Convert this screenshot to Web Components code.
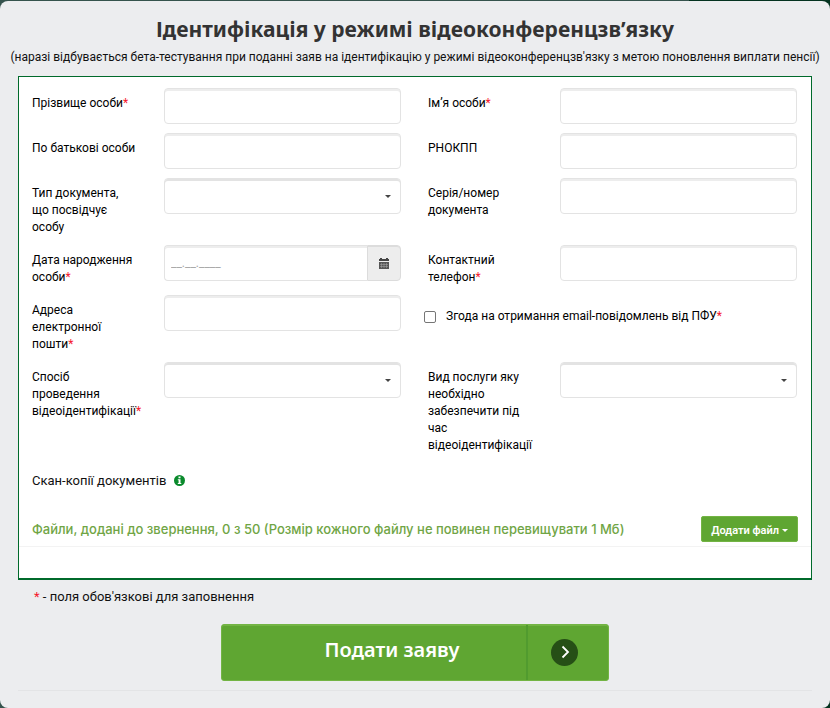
<!DOCTYPE html>
<html lang="uk">
<head>
<meta charset="utf-8">
<meta name="viewport" content="width=device-width, initial-scale=1">
<title>Ідентифікація у режимі відеоконференцзв’язку</title>
<style>
  body {
    margin: 0;
    min-height: 100vh;
    display: flex;
    background: linear-gradient(90deg, #35534d 83%, #04331f 83%);
    --font-heading: "Noto Sans", "Open Sans", sans-serif;
    --font-ui: Roboto, "Noto Sans", sans-serif;
    --font-count: Inter, "Liberation Sans", sans-serif;
    --line: #e3e3e3;
    --green: #5fa632;
    --green-light: #73b444;
    --required: #f5172c;
    font-family: var(--font-ui);
    font-size: 12px;
    line-height: 17px;
    color: #111;
  }
</style>
</head>
<body>

<request-page>
  <span slot="title">Ідентифікація у режимі відеоконференцзв’язку</span>
  <span slot="note">(наразі відбувається бета-тестування при поданні заяв на ідентифікацію у режимі відеоконференцзв'язку з метою поновлення виплати пенсії)</span>

  <request-panel>
    <text-field required>Прізвище особи</text-field>
    <text-field required>Ім’я особи</text-field>
    <text-field>По батькові особи</text-field>
    <text-field>РНОКПП</text-field>
    <select-field>Тип документа, що посвідчує особу</select-field>
    <text-field>Серія/номер документа</text-field>
    <date-field required>Дата народження особи</date-field>
    <text-field type="tel" required>Контактний телефон</text-field>
    <text-field type="email" required>Адреса електронної пошти</text-field>
    <check-field required>Згода на отримання email-повідомлень від ПФУ</check-field>
    <select-field required>Спосіб проведення відеоідентифікації</select-field>
    <select-field>Вид послуги яку необхідно забезпечити під час відеоідентифікації</select-field>
    <scan-files slot="files" count="0" max="50" size="1"></scan-files>
  </request-panel>

  <submit-button slot="actions">Подати заяву</submit-button>
</request-page>

<script>
/**
 * Attaches an open shadow root with the given markup.
 * @param $elem
 * @param html
 */
function render($elem, html) {
  const $template = document.createElement("template");
  $template.innerHTML = html;
  const shadow = $elem.attachShadow({ mode: "open" });
  shadow.appendChild($template.content.cloneNode(true));
  return shadow;
}

// Shared by all the labelled fields
const FIELD_STYLES = `
  * {
    box-sizing: border-box;
  }

  :host {
    display: grid;
    grid-template-columns: minmax(0, 132fr) minmax(0, 237fr);
    align-items: start;
    min-width: 0;
  }

  label {
    padding: 7px 28px 0 0;
    font: 400 12px/17px var(--font-ui);
    color: #000;
  }

  .star {
    color: var(--required);
  }

  input, select {
    width: 100%;
    min-width: 0;
    height: 36px;
    margin: 0;
    padding: 4px 6px;
    border: 1px solid var(--line);
    border-radius: 4px;
    background: #fff;
    box-shadow: inset 0 2px 0 #ededed;
    font: 12px/17px var(--font-ui);
    color: #111;
  }
`;

class BaseField extends HTMLElement {
  constructor() {
    super();
    render(this, `
      <style>${FIELD_STYLES}${this.styles}</style>
      <label for="control"><slot></slot>${this.star}</label>
      ${this.control}
    `);
  }

  get star() {
    return this.hasAttribute("required") ? `<span class="star">*</span>` : "";
  }

  get styles() {
    return "";
  }

  get control() {
    return `<input id="control" type="${this.getAttribute("type") || "text"}">`;
  }
}

class TextField extends BaseField {}

class SelectField extends BaseField {
  get styles() {
    return `
      .select {
        display: grid;
        align-items: center;
      }

      .select > * {
        grid-area: 1 / 1;
      }

      select {
        appearance: none;
        box-shadow: inset 0 2px 0 var(--line);
      }

      svg {
        justify-self: end;
        margin-right: 10px;
        pointer-events: none;
      }
    `;
  }

  get control() {
    return `
      <div class="select">
        <select id="control"><option></option></select>
        <svg width="6" height="3" viewBox="0 0 6 3"><path d="M0 0h6L3 3z" fill="#444"/></svg>
      </div>
    `;
  }
}

class DateField extends BaseField {
  get styles() {
    return `
      .group {
        display: flex;
      }

      input {
        flex: 1;
        border-right: 0;
        border-radius: 4px 0 0 4px;
      }

      input::placeholder {
        color: #aaa;
        opacity: 1;
      }

      button {
        display: grid;
        place-items: center;
        width: 34px;
        height: 36px;
        padding: 0;
        border: 1px solid #dcdcdc;
        border-radius: 0 4px 4px 0;
        background: #ededed;
        box-shadow: inset 0 1px 0 #dcdcdc;
      }
    `;
  }

  get control() {
    return `
      <div class="group">
        <input id="control" type="text" placeholder="__.__.____">
        <button type="button" aria-label="Календар">
          <svg width="10" height="11" viewBox="0 0 10 11">
            <path d="M0 1h10v2H0zM1 0h2v1H1zM7 0h2v1H7z" fill="#444"/>
            <path d="M0 4h10v7H0z" fill="#555"/>
            <path d="M1 6.5h8M1 8.5h8M2.5 5v5M5 5v5M7.5 5v5" stroke="#aaa" stroke-width=".5"/>
          </svg>
        </button>
      </div>
    `;
  }
}

class CheckField extends BaseField {
  get styles() {
    return `
      :host {
        display: flex;
        gap: 10px;
        align-items: center;
        align-self: start;
        padding-top: 13px;
        margin-left: -4px;
      }

      label {
        order: 1;
        padding: 0;
      }

      input {
        appearance: none;
        flex: none;
        width: 12px;
        height: 12px;
        padding: 0;
        border: 1px solid #767676;
        border-radius: 2px;
        box-shadow: none;
      }

      input:checked {
        background: var(--green);
      }
    `;
  }

  get control() {
    return `<input id="control" type="checkbox">`;
  }
}

class ScanFiles extends HTMLElement {
  constructor() {
    super();
    render(this, `
      <style>
        :host {
          display: block;
        }

        .scans, .files {
          display: flex;
          align-items: center;
          padding: 0 13px;
        }

        .scans {
          gap: 8px;
          font-size: 13px;
        }

        .files {
          justify-content: space-between;
          gap: 16px;
          margin-top: 27px;
          padding-bottom: 4px;
          border-bottom: 1px solid #f3f3f3;
          color: #70a545;
          font: 500 13px/17px var(--font-count);
        }

        button {
          display: flex;
          align-items: center;
          gap: 3px;
          height: 26px;
          padding: 2px 9px 0;
          border: 1px solid var(--green-light);
          border-radius: 2px;
          background: var(--green);
          font: 600 11px/17px var(--font-ui);
          color: #fff;
          white-space: nowrap;
        }
      </style>
      <div class="scans">
        <span>Скан-копії документів</span>
        <svg width="11" height="11" viewBox="0 0 11 11">
          <circle cx="5.5" cy="5.5" r="5.5" fill="#0a8a2c"/>
          <path d="M4.5 1.6h2v1.6h-2zM3.8 4.3h2.7v3.6h.8v1H3.8v-1h.8V5.3h-.8z" fill="#fff"/>
        </svg>
      </div>
      <div class="files">
        <span>Файли, додані до звернення, ${this.getAttribute("count")} з ${this.getAttribute("max")} (Розмір кожного файлу не повинен перевищувати ${this.getAttribute("size")} Мб)</span>
        <button type="button">Додати файл
          <svg width="6" height="3" viewBox="0 0 6 3"><path d="M0 0h6L3 3z" fill="#fff"/></svg>
        </button>
      </div>
    `);
  }
}

class RequestPanel extends HTMLElement {
  constructor() {
    super();
    render(this, `
      <style>
        :host {
          display: block;
          padding: 11px 0 31px;
          border: 1px solid #006a2b;
          border-bottom-width: 2px;
          background: #fff;
        }

        .fields {
          display: grid;
          grid-template-columns: 1fr 1fr;
          gap: 9px 27px;
          padding: 0 14px 18px 13px;
        }
      </style>
      <div class="fields"><slot></slot></div>
      <slot name="files"></slot>
    `);
  }
}

class SubmitButton extends HTMLElement {
  constructor() {
    super();
    render(this, `
      <style>
        :host {
          display: block;
        }

        button {
          display: flex;
          align-items: stretch;
          width: 388px;
          max-width: 100%;
          height: 57px;
          margin: 0 auto;
          padding: 0;
          border: 1px solid var(--green-light);
          border-radius: 3px;
          background: var(--green);
          box-shadow: inset 0 1px 0 var(--green-light);
          color: #fff;
          font: 600 20px/28px var(--font-heading);
        }

        .text {
          flex: 1;
          padding: 11px 0 0 36px;
        }

        .arrow {
          display: grid;
          place-items: center;
          width: 82px;
          padding-right: 8px;
          box-sizing: border-box;
          border-left: 2px solid #519b2f;
        }
      </style>
      <button type="submit">
        <span class="text"><slot></slot></span>
        <span class="arrow">
          <svg width="27" height="27" viewBox="0 0 27 27">
            <circle cx="13.5" cy="13.5" r="13.5" fill="#264f16"/>
            <path d="M11.5 7.5l5.5 5.5-5.5 5.5" fill="none" stroke="#fff" stroke-width="1.8"/>
          </svg>
        </span>
      </button>
    `);
  }
}

class RequestPage extends HTMLElement {
  constructor() {
    super();
    render(this, `
      <style>
        :host {
          display: block;
          flex: 1;
          min-width: 0;
          margin-top: 1px;
          border-radius: 8px;
          background: #ecedef;
        }

        h1 {
          margin: 0;
          padding-top: 13px;
          font: 700 21px/30px var(--font-heading);
          color: #333;
          text-align: center;
        }

        .note {
          margin: 5px 0 10px;
          text-align: center;
        }

        form {
          margin: 0 18px;
        }

        .legend {
          margin: 8px 0 19px;
          padding-left: 16px;
          font-size: 13px;
        }

        .star {
          color: var(--required);
        }

        hr {
          margin: 9px 0 0;
          border: 0;
          border-top: 1px solid #e3e4e6;
        }
      </style>
      <h1><slot name="title"></slot></h1>
      <p class="note"><slot name="note"></slot></p>
      <form>
        <slot></slot>
        <p class="legend"><span class="star">*</span> - поля обов'язкові для заповнення</p>
        <slot name="actions"></slot>
        <hr>
      </form>
    `);
  }
}

window.customElements.define("text-field", TextField);
window.customElements.define("select-field", SelectField);
window.customElements.define("date-field", DateField);
window.customElements.define("check-field", CheckField);
window.customElements.define("scan-files", ScanFiles);
window.customElements.define("request-panel", RequestPanel);
window.customElements.define("submit-button", SubmitButton);
window.customElements.define("request-page", RequestPage);
</script>
</body>
</html>
